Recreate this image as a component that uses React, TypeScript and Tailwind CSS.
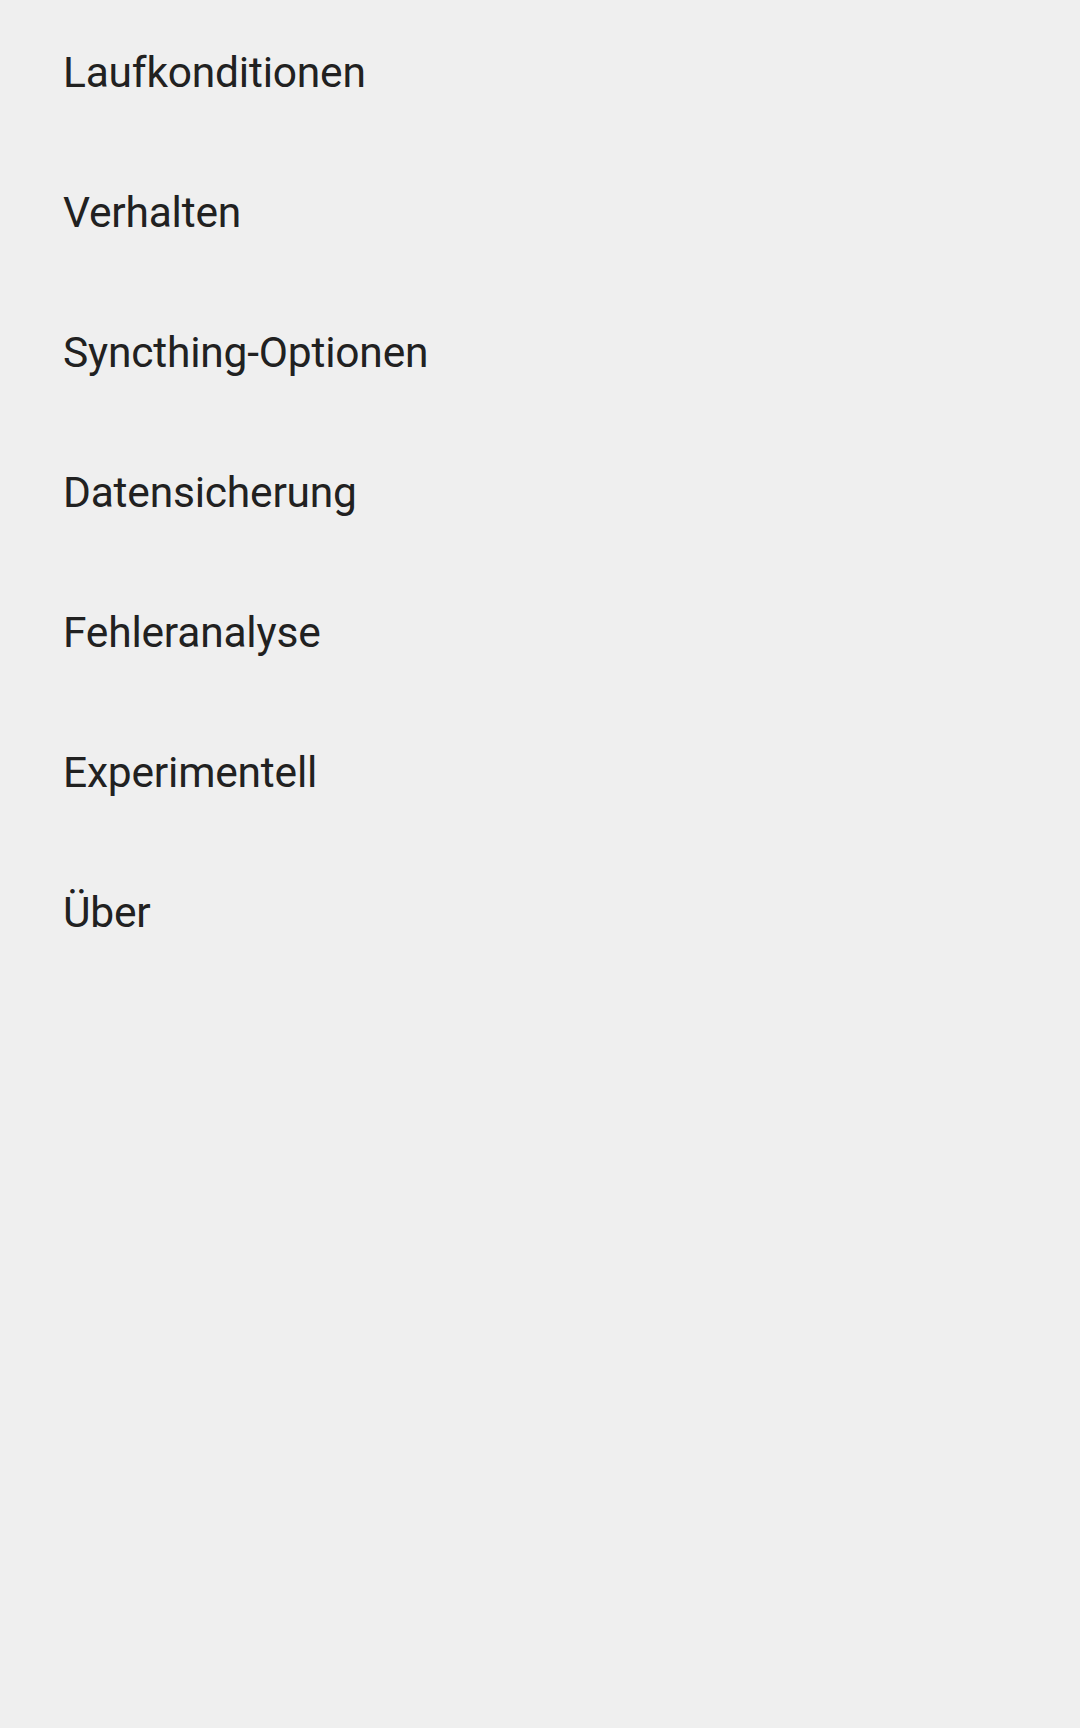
export default function App() {
  const items = [
    "Laufkonditionen",
    "Verhalten",
    "Syncthing-Optionen",
    "Datensicherung",
    "Fehleranalyse",
    "Experimentell",
    "Über",
  ];
  return (
    <div
      className="w-[1080px] h-[1728px] bg-[#efefef] flex flex-col pt-[3px]"
      style={{ fontFamily: "Roboto, 'Noto Sans', sans-serif" }}
    >
      {items.map((t) => (
        <div key={t} className="h-[140px] flex items-center pl-[63px] shrink-0">
          <span className="text-[42.5px] leading-[52px] tracking-[-0.2px] text-[#212121]">{t}</span>
        </div>
      ))}
    </div>
  );
}
